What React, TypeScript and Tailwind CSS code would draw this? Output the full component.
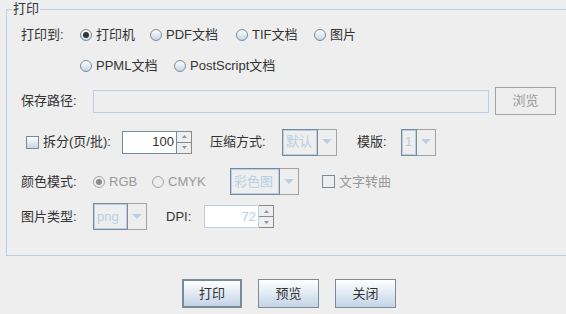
import React from 'react'

const font = { fontFamily: '"Liberation Sans", "Noto Sans CJK SC", sans-serif' }

function Radio({ checked, disabled, label, w }: { checked?: boolean; disabled?: boolean; label: string; w?: string }) {
  return (
    <div className={`flex items-center h-[22px] ${w ?? ''}`}>
      <span
        className={`w-[12px] h-[12px] rounded-full border flex items-center justify-center ${
          disabled ? 'border-[#a3a3a3] bg-[#eeeeee]' : 'border-[#7a8a99] bg-gradient-to-b from-white to-[#c5d5e6]'
        }`}
      >
        {checked && <span className={`w-[6px] h-[6px] rounded-full ${disabled ? 'bg-[#8a8a8a]' : 'bg-[#333333]'}`} />}
      </span>
      <span className={`ml-[4px] ${disabled ? 'text-[#999999]' : 'text-[#333333]'}`}>{label}</span>
    </div>
  )
}

function Check({ disabled }: { disabled?: boolean }) {
  return (
    <span
      className={`w-[13px] h-[13px] border ${
        disabled ? 'border-[#7a8a99] bg-[#eeeeee]' : 'border-[#7a8a99] bg-gradient-to-b from-white to-[#c5d5e6]'
      }`}
    />
  )
}

function Arrow() {
  return (
    <svg width="10" height="6" viewBox="0 0 10 6">
      <path d="M0 0 L10 0 L5 5 Z" fill="#b8cfe5" />
    </svg>
  )
}

function Combo({ fw, text }: { fw: string; text: string }) {
  return (
    <div className="flex h-[27px]">
      <div className={`${fw} border border-[#7a8a99] flex`}>
        <div className="flex-1 border border-[#b8cfe5] flex items-center px-[2px] text-[#b8cfe5]">{text}</div>
      </div>
      <div className="w-[19px] border border-l-0 border-[#a3a3a3] flex items-center justify-center">
        <Arrow />
      </div>
    </div>
  )
}

function Spinner({ value, disabled }: { value: string; disabled?: boolean }) {
  return (
    <div className="flex h-[23px]">
      <div
        className={`w-[55px] border bg-white flex items-center justify-end pr-[2px] ${
          disabled ? 'border-[#b8cfe5] text-[#b8cfe5]' : 'border-[#7a8a99] text-[#333333]'
        }`}
      >
        {value}
      </div>
      <div className="w-[15px] flex flex-col">
        <div className="flex-1 border border-l-0 border-[#8a8a8a] flex items-center justify-center">
          <svg width="5" height="3" viewBox="0 0 5 3"><path d="M0 3 L5 3 L2.5 0 Z" fill="#8a99a8" /></svg>
        </div>
        <div className="flex-1 border border-l-0 border-t-0 border-[#8a8a8a] flex items-center justify-center">
          <svg width="5" height="3" viewBox="0 0 5 3"><path d="M0 0 L5 0 L2.5 3 Z" fill="#8a99a8" /></svg>
        </div>
      </div>
    </div>
  )
}

function Btn({ label, primary, w }: { label: string; primary?: boolean; w: string }) {
  return (
    <button
      className={`${w} h-[29px] bg-gradient-to-b from-white to-[#c3d4e7] text-[#333333] flex items-center justify-center ${
        primary ? 'border-2 border-[#7a8a99]' : 'border border-[#7a8a99]'
      }`}
    >
      {label}
    </button>
  )
}

export default function App() {
  return (
    <div className="w-[566px] h-[314px] bg-[#eeeeee] text-[13px] text-[#333333] overflow-hidden flex flex-col" style={font}>
      <div className="relative ml-[6px] mt-[9px] h-[247px] border-l border-t border-b border-[#b8cfe5] pl-[14px] flex flex-col">
        <span className="absolute left-[5px] top-[-9px] px-[1px] bg-[#eeeeee] leading-[16px]">打印</span>

        <div className="flex items-center mt-[14px]">
          <span className="w-[59px]">打印到:</span>
          <Radio checked label="打印机" w="w-[70px]" />
          <Radio label="PDF文档" w="w-[86px]" />
          <Radio label="TIF文档" w="w-[78px]" />
          <Radio label="图片" />
        </div>

        <div className="flex items-center mt-[9px] pl-[59px]">
          <Radio label="PPML文档" w="w-[94px]" />
          <Radio label="PostScript文档" />
        </div>

        <div className="flex items-center h-[28px] mt-[10px]">
          <span className="w-[72px]">保存路径:</span>
          <div className="w-[396px] h-[23px] border border-[#b8cfe5]" />
          <button className="ml-[6px] w-[61px] h-[28px] border border-[#a3a3a3] text-[#999999] flex items-center justify-center">浏览</button>
        </div>

        <div className="flex items-center h-[26px] mt-[14px]">
          <div className="flex items-center pl-[5px] w-[101px]">
            <Check />
            <span className="ml-[4px]">拆分(页/批):</span>
          </div>
          <Spinner value="100" />
          <span className="ml-[18px] w-[72px]">压缩方式:</span>
          <Combo fw="w-[36px]" text="默认" />
          <span className="ml-[20px] w-[44px]">模版:</span>
          <Combo fw="w-[16px]" text="1" />
        </div>

        <div className="flex items-center h-[27px] mt-[13px]">
          <span className="w-[72px]">颜色模式:</span>
          <Radio checked disabled label="RGB" w="w-[59px]" />
          <Radio disabled label="CMYK" w="w-[78px]" />
          <Combo fw="w-[50px]" text="彩色图" />
          <div className="flex items-center ml-[23px]">
            <Check disabled />
            <span className="ml-[4px] text-[#999999]">文字转曲</span>
          </div>
        </div>

        <div className="flex items-center h-[27px] mt-[8px]">
          <span className="w-[72px]">图片类型:</span>
          <Combo fw="w-[35px]" text="png" />
          <span className="ml-[19px] w-[38px]">DPI:</span>
          <Spinner value="72" disabled />
        </div>
      </div>

      <div className="flex justify-center gap-[16px] mt-[23px] pl-[12px]">
        <Btn label="打印" primary w="w-[60px]" />
        <Btn label="预览" w="w-[61px]" />
        <Btn label="关闭" w="w-[61px]" />
      </div>
    </div>
  )
}
